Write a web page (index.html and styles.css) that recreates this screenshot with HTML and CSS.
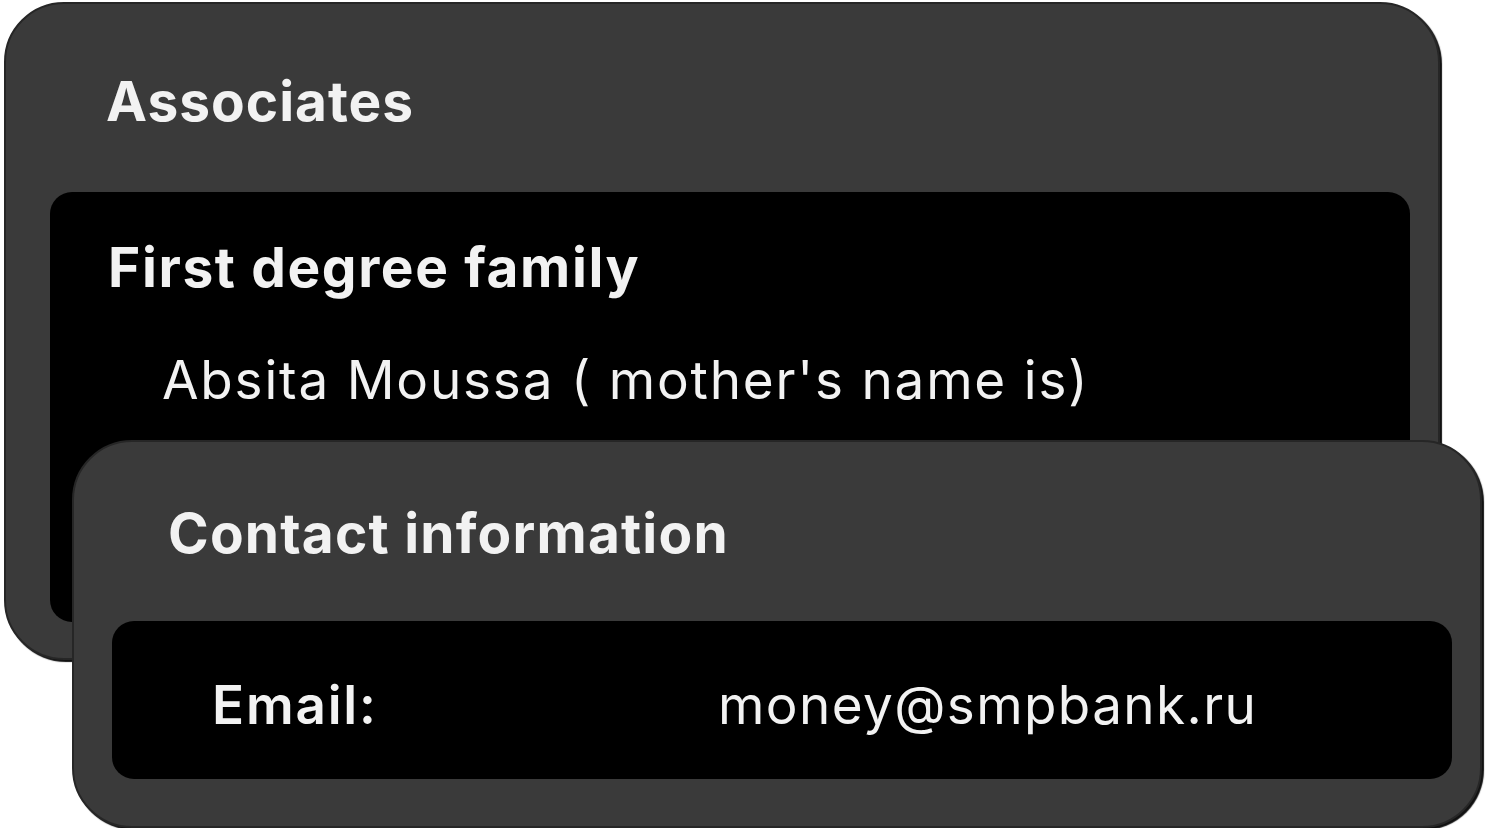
FILE: index.html
```html
<!DOCTYPE html>
<html lang="en">
<head>
<meta charset="UTF-8">
<meta name="viewport" content="width=device-width, initial-scale=1.0">
<title>Associates</title>
<link rel="stylesheet" href="styles.css">
</head>
<body>
<div class="stack">
  <section class="card card-assoc">
    <h2 class="card-title">Associates</h2>
    <div class="panel panel-family">
      <h3 class="panel-title">First degree family</h3>
      <p class="person">Absita Moussa ( mother's name is)</p>
    </div>
  </section>
  <section class="card card-contact">
    <h2 class="card-title">Contact information</h2>
    <div class="panel panel-contact">
      <span class="field-label">Email:</span>
      <span class="field-value">money@smpbank.ru</span>
    </div>
  </section>
</div>
</body>
</html>
```
FILE: styles.css
```css
body {
  margin: 0;
  background: #ffffff;
  font-family: Inter, "Noto Sans", sans-serif;
  color: #f2f2f2;
}
.stack {
  padding: 2px 0 0 4px;
}
.card {
  box-sizing: border-box;
  background: #3a3a3a;
  border-radius: 60px;
  border: 2px solid #262626;
  box-shadow: 2px 2px 1px #111111; /* dark rim on the lower right */
}
.card-title {
  margin: 0;
  font-size: 55px;
  font-weight: 700;
  line-height: 1;
  letter-spacing: 1px;
}
.panel {
  box-sizing: border-box;
  background: #000000;
  border-radius: 22px;
}

/* first card */
.card-assoc {
  width: 1436px;
  height: 658px;
  padding: 70px 28px 0 44px;
  overflow: hidden;
}
.card-assoc .card-title {
  padding-left: 56px;
}
.panel-family {
  margin-top: 63px;
  height: 430px;
  padding: 48px 0 0 58px;
}
.panel-title {
  margin: 0;
  font-size: 55px;
  font-weight: 700;
  line-height: 1;
  letter-spacing: 1.6px;
}
.person {
  margin: 59px 0 0 54px;
  font-size: 53px;
  font-weight: 400;
  line-height: 1;
  letter-spacing: 1.8px;
}

/* second card, laid over the first */
.card-contact {
  position: relative;
  width: 1410px;
  height: 388px;
  margin: -220px 0 0 68px;
  padding: 64px 28px 0 38px;
}
.card-contact .card-title {
  padding-left: 56px;
  letter-spacing: 1.2px;
}
.panel-contact {
  margin-top: 60px;
  height: 158px;
  display: flex;
  align-items: center;
  padding: 10px 0 0 100px;
  font-size: 53px;
}
.field-label {
  width: 506px;
  font-weight: 600;
  letter-spacing: 1.8px;
}
.field-value {
  font-weight: 400;
  letter-spacing: 1.4px;
}
```
